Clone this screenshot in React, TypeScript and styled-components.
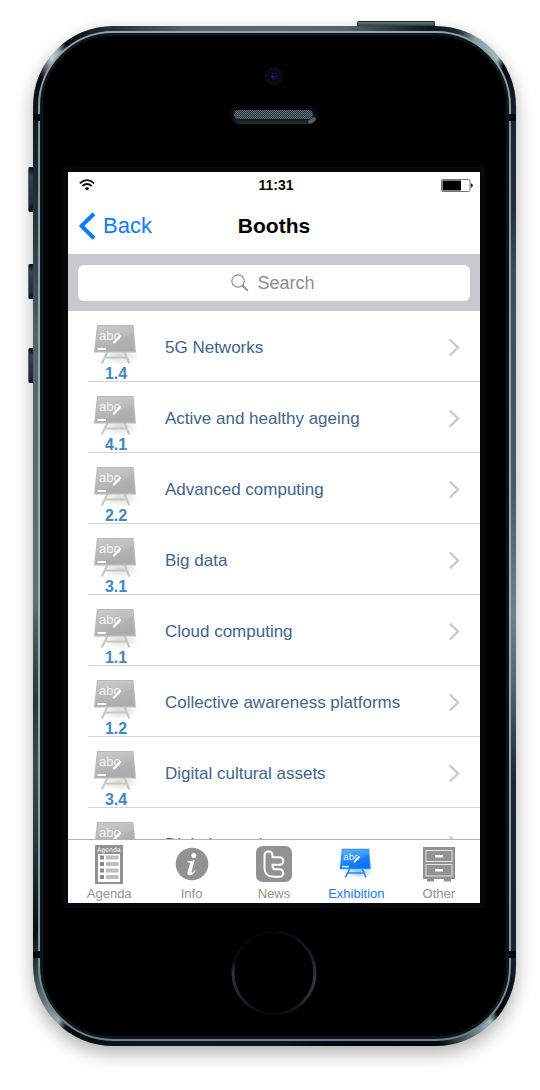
import React, { useId } from "react";
import styled, { createGlobalStyle } from "styled-components";

const GlobalStyle = createGlobalStyle`
  *, *::before, *::after { box-sizing: border-box; }
  body {
    margin: 0;
    background: #fff;
    font-family: "Liberation Sans", Arial, sans-serif;
  }
`;

/* ---------- Device ---------- */

const Page = styled.main`
  display: flex;
  justify-content: center;
  padding: 26px 24px 40px 33px;
`;

const Phone = styled.div`
  position: relative;
  display: flex;
  width: 100%;
  max-width: 483px;
  min-height: 0;
  aspect-ratio: 483 / 1020;
  padding: 5px;
  border-radius: 80px;
  box-shadow: 0 7px 18px rgba(0, 0, 0, 0.32);
  background: conic-gradient(
    #5a686f 0deg,
    #55636a 8deg,
    #0f151a 17deg,
    #1d272c 20deg,
    #8d9aa0 22deg,
    #a9b6bb 25deg,
    #05080c 26deg,
    #1b232b 30deg,
    #252f38 36deg,
    #3d4c53 42deg,
    #4b5b62 80deg,
    #6e8089 108deg,
    #56656d 122deg,
    #1c262e 136deg,
    #1a222b 150deg,
    #030508 154deg,
    #030508 155deg,
    #a7b4b9 156deg,
    #6f7d83 158deg,
    #030405 162deg,
    #030507 172deg,
    #0f161b 180deg,
    #10171c 195deg,
    #05080b 203deg,
    #9aa8ad 204deg,
    #6e7d83 206deg,
    #0a0e14 211deg,
    #2b383e 218deg,
    #3c4a50 226deg,
    #2a363c 235deg,
    #4c5b62 249deg,
    #5f7077 255deg,
    #54646b 310deg,
    #2c383f 322deg,
    #151b22 330deg,
    #05070c 333deg,
    #c3cfd3 335deg,
    #9aa7ac 336deg,
    #05070b 337deg,
    #1e272d 341deg,
    #55636a 350deg,
    #5a686f 360deg
  );
`;

const Rim = styled.div`
  display: flex;
  flex: 1;
  min-width: 0;
  padding: 2px;
  border-radius: 75px;
  background: linear-gradient(#93a5ac, #84979e 10%, #9db1b7 55%, #84979e 90%, #6f8289);
`;

const Glass = styled.div`
  display: flex;
  flex-direction: column;
  flex: 1;
  min-width: 0;
  padding: 0 21px 0 20px;
  border: 3px solid #0b171b;
  border-radius: 73px;
  background: #000;
`;

const Notch = styled.span<{ $side: "left" | "right"; $end: "top" | "bottom" }>`
  position: absolute;
  ${(p) => p.$side}: 0;
  ${(p) => p.$end}: 88px;
  width: 7px;
  height: 7px;
  background: #030506;
`;

const SideButton = styled.span<{ $top: number; $length: number }>`
  position: absolute;
  top: ${(p) => p.$top}px;
  left: -5px;
  width: 5px;
  height: ${(p) => p.$length}px;
  border: 1px solid #0b1014;
  border-left-color: #5d6c73;
  border-right: 0;
  border-radius: 2px 0 0 2px;
  background: linear-gradient(#0c1115, #34434a 20%, #222d34 80%, #0c1115);
`;

const PowerButton = styled.span`
  position: absolute;
  top: -5px;
  right: 81px;
  width: 78px;
  height: 5px;
  border: 1px solid #1a2227;
  border-bottom: 0;
  border-radius: 2px 2px 0 0;
  background: linear-gradient(#6b7a81, #2d393f);
`;

const Forehead = styled.div`
  display: flex;
  flex-direction: column;
  align-items: center;
  gap: 19px;
  height: 131px;
  padding-top: 30px;
`;

const Chin = styled.div`
  display: flex;
  align-items: center;
  justify-content: center;
  height: 128px;
  padding-top: 2px;
`;

const Bezel = styled.div`
  display: flex;
  flex: 1;
  min-height: 0;
  border: 5px solid #05090c;
  border-radius: 4px;
`;

/* ---------- Screen ---------- */

const Screen = styled.div`
  display: flex;
  flex-direction: column;
  flex: 1;
  min-width: 0;
  background: #fff;
`;

const StatusBar = styled.div`
  display: grid;
  grid-template-columns: 1fr auto 1fr;
  align-items: center;
  height: 26px;
  padding: 0 7px 0 11px;
  font-size: 14px;
  font-weight: 700;
  color: #0a0a0a;

  svg:last-child { justify-self: end; }
`;

const NavBar = styled.header`
  display: grid;
  grid-template-columns: 1fr auto 1fr;
  align-items: center;
  height: 56px;
  padding: 0 11px;
`;

const BackButton = styled.button`
  display: flex;
  align-items: center;
  gap: 7px;
  padding: 0;
  border: 0;
  background: none;
  font: 400 22px/28px "Liberation Sans", Arial, sans-serif;
  color: #0a7cff;
`;

const Title = styled.h1`
  margin: 0;
  font-size: 21px;
  line-height: 28px;
  color: #000;
`;

const SearchBar = styled.div`
  padding: 11px 10px 10px;
  background: #c9c8ce;
`;

const SearchField = styled.label`
  display: flex;
  align-items: center;
  justify-content: center;
  gap: 9px;
  height: 36px;
  border-radius: 6px;
  background: #fff;
`;

const SearchInput = styled.input`
  width: 60px;
  field-sizing: content;
  padding: 0;
  border: 0;
  outline: 0;
  background: none;
  font: 400 18px/24px "Liberation Sans", Arial, sans-serif;
  color: #222;

  &::placeholder { color: #8e8e93; opacity: 1; }
`;

const List = styled.ul`
  flex: 1 1 0;
  min-height: 0;
  margin: 0;
  padding: 0;
  overflow: hidden;
  list-style: none;
`;

const Row = styled.a`
  display: flex;
  align-items: center;
  gap: 21px;
  height: 71px;
  margin-left: 20px;
  padding-right: 20px;
  border-bottom: 1px solid #d5d5d7;
  color: #41648c;
  text-decoration: none;
`;

const Booth = styled.span`
  display: flex;
  flex-direction: column;
  align-items: center;
  align-self: flex-end;
  width: 56px;
  font-size: 16px;
  font-weight: 700;
  line-height: 14px;
  color: #4286bf;
`;

const RowLabel = styled.span`
  flex: 1;
  min-width: 0;
  padding-top: 4px;
  font-size: 17px;
  line-height: 22px;
  white-space: nowrap;
`;

const ChevronBox = styled.span`
  display: flex;
  padding-top: 3px;
`;

const TabBar = styled.nav`
  display: grid;
  grid-template-columns: repeat(5, 1fr);
  height: 64px;
  padding-top: 4px;
  border-top: 1px solid #b4b4b6;
  background: #fff;
`;

const Tab = styled.a<{ $active?: boolean }>`
  display: flex;
  flex-direction: column;
  align-items: center;
  font-size: 13px;
  line-height: 20px;
  color: ${(p) => (p.$active ? "#147efb" : "#929292")};
  text-decoration: none;
`;

const TabIcon = styled.span`
  display: flex;
  align-items: center;
  height: 40px;
`;

/* ---------- Drawings ---------- */

function Camera() {
  return (
    <svg width="20" height="20" viewBox="0 0 20 20" aria-hidden="true">
      <circle cx="10" cy="10" r="9.5" fill="#080b0e" />
      <circle cx="10" cy="10" r="5.5" fill="#040611" />
      <circle cx="10" cy="10" r="2.6" fill="none" stroke="#16227c" strokeWidth="1.2" strokeDasharray="2 1.2" />
      <circle cx="9" cy="10.6" r="0.9" fill="#2f46e0" />
    </svg>
  );
}

function Speaker() {
  return (
    <svg width="90" height="20" viewBox="0 0 90 20" aria-hidden="true">
      <defs>
        <pattern id="mesh" width="2" height="2" patternUnits="userSpaceOnUse">
          <rect width="2" height="2" fill="#29363a" />
          <rect width="1" height="1" fill="#65757b" />
          <rect x="1" y="1" width="1" height="1" fill="#5a6a70" />
        </pattern>
        <linearGradient id="lip" x1="0" x2="0" y1="0" y2="1">
          <stop offset="0" stopColor="#04080a" />
          <stop offset="0.6" stopColor="#0b1214" />
          <stop offset="1" stopColor="#263338" />
        </linearGradient>
      </defs>
      <rect x="0" y="0" width="90" height="19" rx="9.5" fill="#04080a" />
      <rect x="4" y="3" width="83" height="16" rx="7" fill="url(#lip)" />
      <rect x="5" y="5" width="79" height="9" rx="4.5" fill="url(#mesh)" />
      <path d="M81 16.500Q84 16 85 14" fill="none" stroke="#8193998f" strokeWidth="4" strokeLinecap="round" />
    </svg>
  );
}

function HomeRing() {
  return (
    <svg width="88" height="88" viewBox="0 0 88 88" aria-hidden="true">
      <defs>
        <linearGradient id="ringLeft" x1="0" x2="0" y1="0" y2="1">
          <stop offset="0" stopColor="#04060a" />
          <stop offset="0.35" stopColor="#06090d" />
          <stop offset="0.5" stopColor="#2b363e" />
          <stop offset="0.75" stopColor="#1f2930" />
          <stop offset="1" stopColor="#05070a" />
        </linearGradient>
        <linearGradient id="ringRight" x1="0" x2="0" y1="0" y2="1">
          <stop offset="0" stopColor="#06080c" />
          <stop offset="0.25" stopColor="#131a22" />
          <stop offset="0.55" stopColor="#2f3b42" />
          <stop offset="0.8" stopColor="#27323a" />
          <stop offset="1" stopColor="#05070a" />
        </linearGradient>
      </defs>
      <path d="M44 3A41 41 0 0 0 44 85" fill="none" stroke="url(#ringLeft)" strokeWidth="3" />
      <path d="M44 3A41 41 0 0 1 44 85" fill="none" stroke="url(#ringRight)" strokeWidth="3" />
    </svg>
  );
}

function Wifi() {
  return (
    <svg width="16" height="12" viewBox="0 0 16 12" fill="none" stroke="#0a0a0a" aria-hidden="true">
      <path d="M0.800 4.300Q8-2 15.200 4.300" strokeWidth="1.700" />
      <path d="M3.300 7Q8 3 12.700 7" strokeWidth="1.700" />
      <path d="M8 11.500L5.600 9.200Q8 7.300 10.400 9.200Z" fill="#0a0a0a" stroke="none" />
    </svg>
  );
}

function Battery() {
  return (
    <svg width="32" height="13" viewBox="0 0 32 13" aria-hidden="true">
      <rect x="0.500" y="0.500" width="28.500" height="12" rx="1.500" fill="#fff" stroke="#777" />
      <rect x="1.500" y="1.500" width="18.500" height="10" fill="#000" />
      <path d="M29.800 4.300Q31.800 4.800 31.800 6.500T29.800 8.700Z" fill="#222" />
    </svg>
  );
}

function BackArrow() {
  return (
    <svg width="17" height="28" viewBox="0 0 17 28" fill="none" aria-hidden="true">
      <path d="M15 1.800L2.500 14L15 26.200" stroke="#0a7cff" strokeWidth="4" />
    </svg>
  );
}

function Magnifier() {
  return (
    <svg width="18" height="18" viewBox="0 0 18 18" fill="none" stroke="#8e8e93" aria-hidden="true">
      <circle cx="7" cy="7" r="6.200" strokeWidth="1.200" />
      <path d="M11.500 11.500L16.800 16.800" strokeWidth="1.900" />
    </svg>
  );
}

function Chevron() {
  return (
    <svg width="12" height="19" viewBox="0 0 12 19" fill="none" aria-hidden="true">
      <path d="M1.800 1.500L10 9.500L1.800 17.500" stroke="#c7c7cc" strokeWidth="2.300" />
    </svg>
  );
}

interface BoardProps {
  width: number;
  height: number;
  light: string;
  dark: string;
  leg: string;
  frame: string;
}

function Board({ width, height, light, dark, leg, frame }: BoardProps) {
  const id = useId();
  return (
    <svg width={width} height={height} viewBox="0 0 56 43" aria-hidden="true">
      <defs>
        <linearGradient id={`${id}f`} x1="0" x2="0.300" y1="0" y2="1">
          <stop offset="0" stopColor={light} />
          <stop offset="1" stopColor={dark} />
        </linearGradient>
        <radialGradient id={`${id}s`}>
          <stop offset="0" stopColor={frame} stopOpacity="0.550" />
          <stop offset="1" stopColor={frame} stopOpacity="0" />
        </radialGradient>
      </defs>
      <ellipse cx="32" cy="32" rx="19" ry="9" fill={`url(#${id}s)`} />
      <path d="M19.500 28L13.800 39.500M36.500 28L41.300 39.500M16.500 33.500H38.500" fill="none" stroke={leg} strokeWidth="2.100" />
      <path d="M9 1H45.500L48 28.500H6Z" fill={frame} />
      <path d="M10 2H44.500L46.500 27H7.500Z" fill={`url(#${id}f)`} />
      <path d="M26 19L46 26.500L45 9Z" fill={dark} opacity="0.450" />
      <text
        x="11"
        y="16"
        fontSize="13"
        fontWeight="400"
        fontFamily="Liberation Sans, Arial, sans-serif"
        fill="#fff"
        fillOpacity="0.850"
      >
        abc
      </text>
      <path d="M26 18.500L32 12" stroke="#fff" strokeWidth="2.300" strokeLinecap="round" />
      <path d="M9.500 25H18" stroke="#fff" strokeWidth="2" />
    </svg>
  );
}

function AgendaIcon() {
  return (
    <svg width="28" height="39" viewBox="0 0 28 39" aria-hidden="true">
      <rect width="28" height="39" fill="#929292" />
      <text x="14" y="7" textAnchor="middle" fontSize="6.500" fontFamily="DejaVu Sans Mono, monospace" fill="#fff">
        Agenda
      </text>
      <rect x="3" y="9" width="22" height="28" fill="#fff" />
      {[10.5, 17, 23.5, 30].map((y) => (
        <g key={y}>
          <rect x="5" y={y} width="4" height="4" fill="#8a8a8a" />
          <rect x="11" y={y} width="12.500" height="4" fill="#bdbdbd" />
        </g>
      ))}
    </svg>
  );
}

function InfoIcon() {
  return (
    <svg width="34" height="34" viewBox="0 0 34 34" aria-hidden="true">
      <circle cx="17" cy="17" r="16.300" fill="#929292" />
      <circle cx="18.800" cy="8.600" r="2.500" fill="#fff" />
      <path
        d="M12.300 14.300Q15.500 14 19.700 12.900L16.500 24.500Q16.200 26 17 25.800Q18.200 25.300 19.800 23L20.700 23.700Q17.700 28.200 14.500 28.200Q11.800 28 12.600 25L15 16.700Q15.400 15.200 12.300 15.300Z"
        fill="#fff"
      />
    </svg>
  );
}

function NewsIcon() {
  return (
    <svg width="36" height="36" viewBox="0 0 36 36" aria-hidden="true">
      <rect width="36" height="36" rx="6.500" fill="#929292" />
      <path
        d="M12.500 5.500Q16.500 5.500 16.500 9.500V11.300H23Q27.300 11.300 27.300 15Q27.300 18.700 23 18.700H16.500V20Q16.500 23.200 19.500 23.200H23Q27.300 23.200 27.300 27Q27.300 30.700 23 30.700H17.500Q8.500 30.700 8.500 21.500V9.500Q8.500 5.500 12.500 5.500Z"
        fill="none"
        stroke="#fff"
        strokeWidth="2"
      />
    </svg>
  );
}

function OtherIcon() {
  return (
    <svg width="32" height="35" viewBox="0 0 32 35" aria-hidden="true">
      <rect width="32" height="32" fill="#929292" />
      <rect x="4" y="32" width="7" height="2.500" fill="#929292" />
      <rect x="21" y="32" width="7" height="2.500" fill="#929292" />
      <rect x="3" y="3.500" width="26" height="11" fill="none" stroke="#e4e4e4" />
      <rect x="3" y="17.500" width="26" height="11.500" fill="none" stroke="#e4e4e4" />
      <rect x="12" y="8" width="8" height="2.500" fill="#fff" />
      <rect x="12" y="22" width="8" height="2.500" fill="#fff" />
    </svg>
  );
}

/* ---------- Content ---------- */

const booths = [
  { name: "5G Networks", stand: "1.4" },
  { name: "Active and healthy ageing", stand: "4.1" },
  { name: "Advanced computing", stand: "2.2" },
  { name: "Big data", stand: "3.1" },
  { name: "Cloud computing", stand: "1.1" },
  { name: "Collective awareness platforms", stand: "1.2" },
  { name: "Digital cultural assets", stand: "3.4" },
  { name: "Digital security", stand: "" },
];

const tabs = [
  { label: "Agenda", icon: <AgendaIcon /> },
  { label: "Info", icon: <InfoIcon /> },
  { label: "News", icon: <NewsIcon /> },
  {
    label: "Exhibition",
    icon: <Board width={42} height={32} light="#5fb0ff" dark="#0a74f5" leg="#2a87f5" frame="#2b8cff" />,
    active: true,
  },
  { label: "Other", icon: <OtherIcon /> },
];

export default function App() {
  return (
    <>
      <GlobalStyle />
      <Page>
        <Phone>
          <PowerButton />
          <SideButton $top={141} $length={45} />
          <SideButton $top={238} $length={35} />
          <SideButton $top={322} $length={35} />
          <Rim>
            <Glass>
              <Forehead>
                <Camera />
                <Speaker />
              </Forehead>
              <Bezel>
                <Screen>
                  <StatusBar>
                    <Wifi />
                    <span>11:31</span>
                    <Battery />
                  </StatusBar>
                  <NavBar>
                    <BackButton type="button">
                      <BackArrow />
                      Back
                    </BackButton>
                    <Title>Booths</Title>
                  </NavBar>
                  <SearchBar>
                    <SearchField>
                      <Magnifier />
                      <SearchInput type="text" placeholder="Search" aria-label="Search" />
                    </SearchField>
                  </SearchBar>
                  <List>
                    {booths.map((b) => (
                      <li key={b.name}>
                        <Row href="#">
                          <Booth>
                            <Board width={56} height={43} light="#cbcbcb" dark="#acacac" leg="#c3cabf" frame="#b9b9b9" />
                            {b.stand || "\u00a0"}
                          </Booth>
                          <RowLabel>{b.name}</RowLabel>
                          <ChevronBox>
                            <Chevron />
                          </ChevronBox>
                        </Row>
                      </li>
                    ))}
                  </List>
                  <TabBar>
                    {tabs.map((t) => (
                      <Tab key={t.label} href="#" $active={t.active}>
                        <TabIcon>{t.icon}</TabIcon>
                        {t.label}
                      </Tab>
                    ))}
                  </TabBar>
                </Screen>
              </Bezel>
              <Chin>
                <HomeRing />
              </Chin>
            </Glass>
          </Rim>
          <Notch $side="left" $end="top" />
          <Notch $side="right" $end="top" />
          <Notch $side="left" $end="bottom" />
          <Notch $side="right" $end="bottom" />
        </Phone>
      </Page>
    </>
  );
}
